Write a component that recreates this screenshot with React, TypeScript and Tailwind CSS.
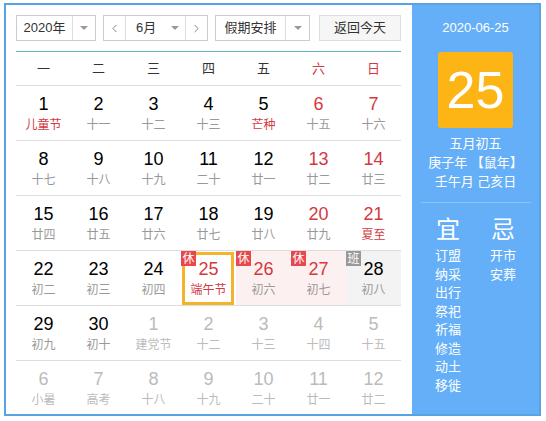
import { ChevronLeft, ChevronRight } from "lucide-react";

type Day = {
    d: number;
    lunar: string;
    other?: boolean;
    red?: boolean;
    fest?: boolean;
    badge?: "休" | "班";
    today?: boolean;
};

const weeks: Day[][] = [
    [
        { d: 1, lunar: "儿童节", fest: true },
        { d: 2, lunar: "十一" },
        { d: 3, lunar: "十二" },
        { d: 4, lunar: "十三" },
        { d: 5, lunar: "芒种", fest: true },
        { d: 6, lunar: "十五", red: true },
        { d: 7, lunar: "十六", red: true },
    ],
    [
        { d: 8, lunar: "十七" },
        { d: 9, lunar: "十八" },
        { d: 10, lunar: "十九" },
        { d: 11, lunar: "二十" },
        { d: 12, lunar: "廿一" },
        { d: 13, lunar: "廿二", red: true },
        { d: 14, lunar: "廿三", red: true },
    ],
    [
        { d: 15, lunar: "廿四" },
        { d: 16, lunar: "廿五" },
        { d: 17, lunar: "廿六" },
        { d: 18, lunar: "廿七" },
        { d: 19, lunar: "廿八" },
        { d: 20, lunar: "廿九", red: true },
        { d: 21, lunar: "夏至", red: true, fest: true },
    ],
    [
        { d: 22, lunar: "初二" },
        { d: 23, lunar: "初三" },
        { d: 24, lunar: "初四" },
        { d: 25, lunar: "端午节", red: true, fest: true, badge: "休", today: true },
        { d: 26, lunar: "初六", red: true, badge: "休" },
        { d: 27, lunar: "初七", red: true, badge: "休" },
        { d: 28, lunar: "初八", badge: "班" },
    ],
    [
        { d: 29, lunar: "初九" },
        { d: 30, lunar: "初十" },
        { d: 1, lunar: "建党节", other: true },
        { d: 2, lunar: "十二", other: true },
        { d: 3, lunar: "十三", other: true },
        { d: 4, lunar: "十四", other: true },
        { d: 5, lunar: "十五", other: true },
    ],
    [
        { d: 6, lunar: "小暑", other: true },
        { d: 7, lunar: "高考", other: true },
        { d: 8, lunar: "十八", other: true },
        { d: 9, lunar: "十九", other: true },
        { d: 10, lunar: "二十", other: true },
        { d: 11, lunar: "廿一", other: true },
        { d: 12, lunar: "廿二", other: true },
    ],
];

const weekdays = ["一", "二", "三", "四", "五", "六", "日"];
const yi = ["订盟", "纳采", "出行", "祭祀", "祈福", "修造", "动土", "移徙"];
const ji = ["开市", "安葬"];

function Caret() {
    return <span className="w-0 h-0 border-l-[4px] border-r-[4px] border-t-[4px] border-l-transparent border-r-transparent border-t-[#999]" />;
}

function Cell({ day }: { day: Day }) {
    let bg = "";
    if (day.badge === "休" && !day.today) bg = "bg-[#fdf0f0]";
    if (day.badge === "班") bg = "bg-[#f3f3f3]";
    const numColor = day.other ? "text-[#bbb]" : day.red ? "text-[#d3393f]" : "text-black";
    const lunarColor = day.other ? "text-[#bbb]" : day.fest ? "text-[#d3393f]" : "text-[#999]";
    return (
        <div className={`relative h-[54px] flex flex-col items-center pt-[8px] ${bg}`}>
            {day.today && (
                <div className="absolute left-[1px] right-[2px] top-[1px] bottom-0 border-[3px] border-[#f5b32c]" />
            )}
            {day.badge && (
                <span
                    className={`absolute left-0 top-0 w-[15px] h-[15px] flex items-center justify-center text-[12px] leading-none text-white ${day.badge === "休" ? "bg-[#e8474b]" : "bg-[#999]"}`}
                >
                    {day.badge}
                </span>
            )}
            <span className={`text-[18px] leading-[20px] ${numColor}`}>{day.d}</span>
            <span className={`mt-[3px] text-[12px] leading-[16px] ${lunarColor}`}>{day.lunar}</span>
        </div>
    );
}

export default function App() {
    return (
        <div className="w-[546px] h-[421px] bg-white pt-[3px] pl-[4px] font-['Liberation_Sans','Noto_Sans_CJK_SC',sans-serif]">
            <div className="w-[537px] h-[413px] border-2 border-[#5aa3e3] flex">
                <div className="w-[406px] pl-[10px] pt-[10px]">
                    <div className="flex items-center h-[26px] text-[13px] text-[#333]">
                        <div className="flex h-[26px] w-[80px] border border-[#ccc]">
                            <span className="flex-1 flex items-center justify-center">2020年</span>
                            <span className="w-[23px] border-l border-[#ddd] flex items-center justify-center"><Caret /></span>
                        </div>
                        <div className="ml-[7px] flex h-[26px] w-[105px] border border-[#ccc]">
                            <span className="w-[22px] border-r border-[#ddd] flex items-center justify-center text-[#666]"><ChevronLeft size={13} strokeWidth={1.5} /></span>
                            <span className="flex-1 flex items-center pl-[10px]">6月</span>
                            <span className="w-[20px] flex items-center justify-center"><Caret /></span>
                            <span className="w-[22px] border-l border-[#ddd] flex items-center justify-center text-[#666]"><ChevronRight size={13} strokeWidth={1.5} /></span>
                        </div>
                        <div className="ml-[7px] flex h-[26px] w-[95px] border border-[#ccc]">
                            <span className="flex-1 flex items-center justify-center">假期安排</span>
                            <span className="w-[24px] border-l border-[#ddd] flex items-center justify-center"><Caret /></span>
                        </div>
                        <div className="ml-[9px] h-[26px] w-[82px] border border-[#ddd] bg-[#f6f6f6] flex items-center justify-center">
                            返回今天
                        </div>
                    </div>
                    <div className="w-[385px] mt-[10px] border-t border-[#66b3c6]">
                        <div className="grid grid-cols-7 h-[33px] items-center text-[13px] text-[#333]">
                            {weekdays.map((w, i) => (
                                <span key={w} className={`text-center ${i >= 5 ? "text-[#d3393f]" : ""}`}>{w}</span>
                            ))}
                        </div>
                        {weeks.map((week, i) => (
                            <div key={i} className="grid grid-cols-7 border-t border-[#ddd]">
                                {week.map((day, j) => (
                                    <Cell key={j} day={day} />
                                ))}
                            </div>
                        ))}
                    </div>
                </div>
                <div className="flex-1 bg-[#64aff7] flex flex-col items-center text-white">
                    <div className="mt-[14px] text-[13px] leading-[18px]">2020-06-25</div>
                    <div className="mt-[15px] w-[75px] h-[76px] rounded-[3px] bg-[#fdb516] flex items-center justify-center text-[52px] leading-none">
                        25
                    </div>
                    <div className="mt-[6px] text-[13px] leading-[19px] text-center">
                        <div>五月初五</div>
                        <div>庚子年 【鼠年】</div>
                        <div>壬午月 己亥日</div>
                    </div>
                    <div className="mt-[11px] w-[110px] border-t border-[#8cc3f8]" />
                    <div className="mt-[12px] flex gap-[15px]">
                        <div className="w-[40px] flex flex-col items-center">
                            <span className="text-[24px] leading-[30px]">宜</span>
                            <div className="mt-[2px] text-[13px] leading-[18.5px] text-center">
                                {yi.map((t) => <div key={t}>{t}</div>)}
                            </div>
                        </div>
                        <div className="w-[40px] flex flex-col items-center">
                            <span className="text-[24px] leading-[30px]">忌</span>
                            <div className="mt-[2px] text-[13px] leading-[18.5px] text-center">
                                {ji.map((t) => <div key={t}>{t}</div>)}
                            </div>
                        </div>
                    </div>
                </div>
            </div>
        </div>
    );
}
